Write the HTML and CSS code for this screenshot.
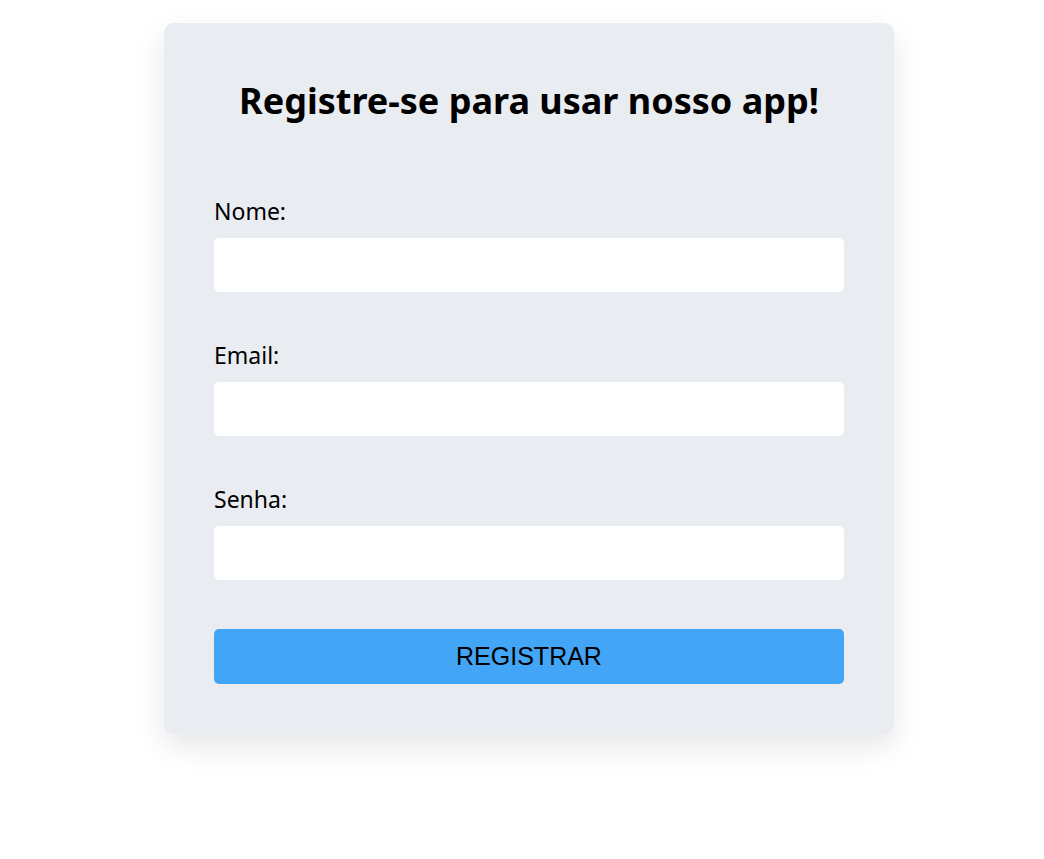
FILE: index.html
```html
<!DOCTYPE html>
<html lang="pt">
<head>
<meta charset="utf-8">
<title>Registro</title>
<link rel="stylesheet" href="styles.css">
</head>
<body>
<main class="page">
  <section class="card">
    <h1 class="title">Registre-se para usar nosso app!</h1>
    <form class="form">
      <div class="field">
        <label class="label" for="nome">Nome:</label>
        <input class="input" id="nome" type="text">
      </div>
      <div class="field">
        <label class="label" for="email">Email:</label>
        <input class="input" id="email" type="email">
      </div>
      <div class="field">
        <label class="label" for="senha">Senha:</label>
        <input class="input" id="senha" type="password">
      </div>
      <button class="button" type="button">REGISTRAR</button>
    </form>
  </section>
</main>
</body>
</html>
```

FILE: styles.css
```css
* { box-sizing: border-box; }
html, body { margin: 0; padding: 0; background: #ffffff; }
body { font-family: "Noto Sans", "Open Sans", sans-serif; color: #000; }
.page {
  display: flex;
  justify-content: center;
  padding: 23px 0 80px 14px;
}
.card {
  width: 730px;
  background: #e9ecf1;
  border-radius: 10px;
  padding: 50px;
  box-shadow: 0 12px 30px rgba(0, 0, 0, 0.10);
}
.title {
  margin: 0;
  font-size: 36px;
  line-height: 56px;
  font-weight: 700;
  text-align: center;
}
.form {
  display: flex;
  flex-direction: column;
  margin-top: 67px;
}
.field {
  display: flex;
  flex-direction: column;
  gap: 12px;
  margin-bottom: 48px;
}
.field:nth-child(3) { margin-bottom: 49px; }
.label {
  font-size: 23px;
  line-height: 30px;
}
.input {
  height: 54px;
  border: none;
  border-radius: 5px;
  background: #ffffff;
  font: inherit;
  padding: 0 12px;
}
.button {
  height: 55px;
  border: none;
  border-radius: 5px;
  background: #42a5f5;
  color: #000;
  font-family: "Liberation Sans", Arial, sans-serif;
  font-size: 25px;
}
```
